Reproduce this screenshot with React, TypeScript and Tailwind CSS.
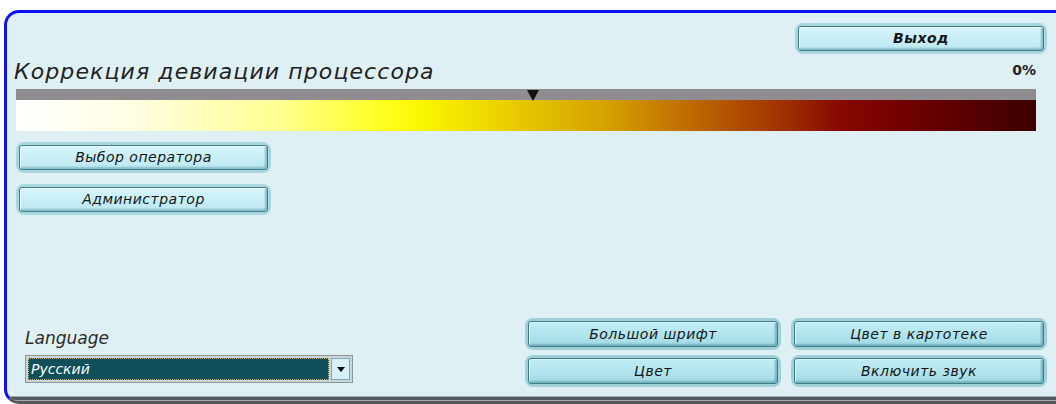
import type { ReactNode } from 'react';

const BAR_GRADIENT =
  'linear-gradient(to right, #ffffff 0%, #fffde0 12%, #ffff90 26%, #ffff20 36%, #fbf500 40%, #ecd400 47%, #e0bc00 52%, #d6a000 58%, #c47800 64%, #b25200 70%, #9c2c00 76%, #860800 81%, #720000 87%, #5a0000 93%, #3c0000 100%)';

function Btn({
  children,
  width,
  bold,
  dark,
}: {
  children: ReactNode;
  width: string;
  bold?: boolean;
  dark?: boolean;
}) {
  return (
    <div
      className={
        'p-[3px] rounded-[8px] ' +
        width +
        (dark ? ' bg-[#9fd0da]' : ' bg-[#a9d7e0]')
      }
    >
      <div
        className={
          'flex items-center justify-center rounded-[3px] border border-[#3f7d89] italic text-[14px] tracking-[0.5px] text-[#151515] ' +
          (dark
            ? 'h-[26px] bg-gradient-to-b from-[#c2eef6] to-[#a2dbe6] shadow-[inset_1px_1px_0_#d8f6fb,inset_-2px_-2px_2px_#73b1bd]'
            : 'h-[25px] bg-gradient-to-b from-[#d6f5fb] to-[#bce8f1] shadow-[inset_1px_1px_0_#effcff,inset_-2px_-2px_2px_#86bec9]') +
          (bold ? ' font-bold' : '')
        }
      >
        {children}
      </div>
    </div>
  );
}

export default function App() {
  return (
    <div className="w-[1056px] h-[404px] overflow-hidden bg-white font-['DejaVu_Sans',sans-serif]">
      <div className="ml-[4px] mt-[10px] w-[1090px] h-[394px] border-[3px] border-[#0a12f2] border-b-[#55595d] rounded-[15px] bg-[#dff0f5] overflow-hidden flex flex-col">
        <div className="pl-[9px] w-[1040px] flex flex-col">
          {/* exit */}
          <div className="mt-[10px] flex justify-end">
            <Btn width="w-[252px]" bold>
              Выход
            </Btn>
          </div>

          {/* title + percent */}
          <div className="mt-[4px] w-[1020px] flex justify-between">
            <span className="italic text-[22px] leading-[28px] tracking-[1.1px] text-[#222] -ml-[2px]">
              Коррекция девиации процессора
            </span>
            <span className="mt-[4px] text-[14px] leading-[16px] font-bold text-[#222]">
              0%
            </span>
          </div>

          {/* deviation bar */}
          <div className="mt-[3px] w-[1020px] relative">
            <div className="h-[11px] bg-[#8f8d90]" />
            <div className="h-[31px]" style={{ background: BAR_GRADIENT }} />
            <svg
              className="absolute left-[511px] top-[1px]"
              width="12"
              height="11"
              viewBox="0 0 12 11"
            >
              <path d="M0 0 L12 0 L6 11 Z" fill="#111" />
            </svg>
          </div>

          <div className="mt-[11px]">
            <Btn width="w-[255px]">Выбор оператора</Btn>
          </div>
          <div className="mt-[11px]">
            <Btn width="w-[255px]">Администратор</Btn>
          </div>

          {/* bottom: language + options */}
          <div className="mt-[103px] flex">
            <div className="w-[511px] pl-[9px] flex flex-col">
              <span className="mt-[10px] italic text-[17px] leading-[20px] text-[#2a2a2a]">
                Language
              </span>
              <div className="mt-[7px] w-[328px] h-[28px] border border-[#8c979a] bg-[#c9d6d9] p-[2px] flex">
                <div className="flex-1 bg-[#0e4f5b] border border-dotted border-[#c9b27a] flex items-center pl-[2px] italic text-[14px] text-white">
                  Русский
                </div>
                <div className="w-[19px] ml-[2px] bg-[#d6f1f7] border border-[#7fa7b0] flex items-center justify-center">
                  <svg width="8" height="5" viewBox="0 0 8 5">
                    <path d="M0 0 L8 0 L4 5 Z" fill="#000" />
                  </svg>
                </div>
              </div>
            </div>
            <div className="grid grid-cols-[256px_256px] gap-x-[10px] gap-y-[5px]">
              <Btn width="w-[256px]" dark>
                Большой шрифт
              </Btn>
              <Btn width="w-[256px]" dark>
                Цвет в картотеке
              </Btn>
              <Btn width="w-[256px]" dark>
                Цвет
              </Btn>
              <Btn width="w-[256px]" dark>
                Включить звук
              </Btn>
            </div>
          </div>
        </div>

        {/* bottom separator */}
        <div className="mt-auto h-[5px] bg-[#55595d] border-t border-b border-[#a3a8ab]" />
      </div>
    </div>
  );
}
